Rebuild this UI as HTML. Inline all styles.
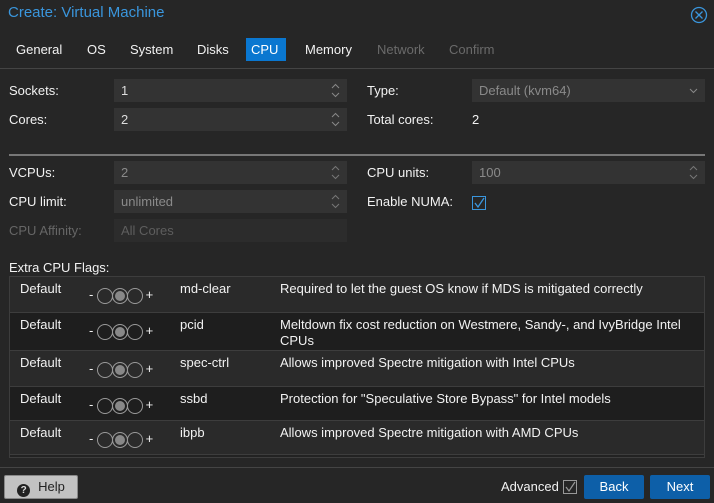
<!DOCTYPE html>
<html><head><style>
body{margin:0;width:714px;height:503px;background:#262626;font-family:"Liberation Sans",sans-serif;font-size:13px;color:#f2f2f2;position:relative;overflow:hidden}
.a{position:absolute}
.title{left:8px;top:4px;font-size:15px;color:#3a96dd}
.tab{top:38px;height:23px;line-height:23px;padding:0 5px;font-size:13px}
.inp{background:#333;height:23px;line-height:23px;padding-left:7px;box-sizing:border-box;color:#ddd}
.dis{color:#8a8a8a}
.lbl{line-height:23px}
.spin{position:absolute;right:7px;top:4px}
.row{position:absolute;left:10px;width:694px;border-bottom:1px solid #3d3d3d}
.row span{position:absolute;top:4px;line-height:16px}
.tri{position:absolute;left:79px;top:10px;font-size:13px;white-space:nowrap}
.c{display:inline-block;width:16px;height:16px;border:1px solid #999;border-radius:50%;vertical-align:middle;margin-right:-1px;box-sizing:border-box}
.btn{top:475px;height:24px;line-height:24px;text-align:center;border-radius:2px}
</style></head><body>
<div class="a title">Create: Virtual Machine</div>
<svg class="a" style="left:690px;top:6px" width="18" height="18"><circle cx="9" cy="9" r="7.5" fill="none" stroke="#3a96dd" stroke-width="1.3"/><path d="M5.5 5.5L12.5 12.5M12.5 5.5L5.5 12.5" stroke="#3a96dd" stroke-width="1.3"/></svg>
<div class="a tab" style="left:11px">General</div>
<div class="a tab" style="left:82px">OS</div>
<div class="a tab" style="left:125px">System</div>
<div class="a tab" style="left:192px">Disks</div>
<div class="a tab" style="left:246px;width:30px;background:#0a77d0;color:#fff">CPU</div>
<div class="a tab" style="left:300px">Memory</div>
<div class="a tab" style="left:372px;color:#6a6a6a">Network</div>
<div class="a tab" style="left:444px;color:#6a6a6a">Confirm</div>
<div class="a" style="left:0;top:68px;width:714px;height:1px;background:#444"></div>

<div class="a lbl" style="left:9px;top:79px">Sockets:</div>
<div class="a inp" style="left:114px;top:79px;width:233px">1<svg class="spin" width="9" height="15"><path d="M1 5L4.5 1.5L8 5M1 10L4.5 13.5L8 10" fill="none" stroke="#888"/></svg></div>
<div class="a lbl" style="left:9px;top:108px">Cores:</div>
<div class="a inp" style="left:114px;top:108px;width:233px">2<svg class="spin" width="9" height="15"><path d="M1 5L4.5 1.5L8 5M1 10L4.5 13.5L8 10" fill="none" stroke="#888"/></svg></div>
<div class="a lbl" style="left:367px;top:79px">Type:</div>
<div class="a inp dis" style="left:472px;top:79px;width:233px">Default (kvm64)<svg class="spin" style="top:9px" width="9" height="6"><path d="M1 1L4.5 4.5L8 1" fill="none" stroke="#888"/></svg></div>
<div class="a lbl" style="left:367px;top:108px">Total cores:</div>
<div class="a lbl" style="left:472px;top:108px">2</div>

<div class="a" style="left:9px;top:154px;width:696px;height:2px;background:#777"></div>

<div class="a lbl" style="left:9px;top:161px">VCPUs:</div>
<div class="a inp dis" style="left:114px;top:161px;width:233px">2<svg class="spin" width="9" height="15"><path d="M1 5L4.5 1.5L8 5M1 10L4.5 13.5L8 10" fill="none" stroke="#777"/></svg></div>
<div class="a lbl" style="left:9px;top:190px">CPU limit:</div>
<div class="a inp dis" style="left:114px;top:190px;width:233px">unlimited<svg class="spin" width="9" height="15"><path d="M1 5L4.5 1.5L8 5M1 10L4.5 13.5L8 10" fill="none" stroke="#777"/></svg></div>
<div class="a lbl" style="left:9px;top:219px;color:#666">CPU Affinity:</div>
<div class="a inp" style="left:114px;top:219px;width:233px;background:#2c2c2c;color:#5e5e5e">All Cores</div>
<div class="a lbl" style="left:367px;top:161px">CPU units:</div>
<div class="a inp dis" style="left:472px;top:161px;width:233px">100<svg class="spin" width="9" height="15"><path d="M1 5L4.5 1.5L8 5M1 10L4.5 13.5L8 10" fill="none" stroke="#777"/></svg></div>
<div class="a lbl" style="left:367px;top:190px">Enable NUMA:</div>
<svg class="a" style="left:472px;top:196px" width="14" height="14"><rect x="0.5" y="0.5" width="13" height="13" fill="none" stroke="#3a96dd"/><path d="M3 7L6 11L12 2" fill="none" stroke="#3a96dd" stroke-width="1.3"/></svg>

<div class="a" style="left:9px;top:260px">Extra CPU Flags:</div>
<div class="a" style="left:9px;top:276px;width:696px;height:182px;border:1px solid #3d3d3d;box-sizing:border-box;background:#222;overflow:hidden">
<div class="row" style="left:0;top:0;height:35px;background:#2a2a2a"><span style="left:10px">Default</span><div class="tri">- <i class="c"></i><i class="c" style="background:#888;box-shadow:inset 0 0 0 2px #2a2a2a"></i><i class="c"></i> +</div><span style="left:170px">md-clear</span><span style="left:270px">Required to let the guest OS know if MDS is mitigated correctly</span></div>
<div class="row" style="left:0;top:36px;height:37px;background:#1e1e1e"><span style="left:10px">Default</span><div class="tri">- <i class="c"></i><i class="c" style="background:#888;box-shadow:inset 0 0 0 2px #1e1e1e"></i><i class="c"></i> +</div><span style="left:170px">pcid</span><span style="left:270px;width:420px">Meltdown fix cost reduction on Westmere, Sandy-, and IvyBridge Intel CPUs</span></div>
<div class="row" style="left:0;top:74px;height:35px;background:#2a2a2a"><span style="left:10px">Default</span><div class="tri">- <i class="c"></i><i class="c" style="background:#888;box-shadow:inset 0 0 0 2px #2a2a2a"></i><i class="c"></i> +</div><span style="left:170px">spec-ctrl</span><span style="left:270px">Allows improved Spectre mitigation with Intel CPUs</span></div>
<div class="row" style="left:0;top:110px;height:33px;background:#1e1e1e"><span style="left:10px">Default</span><div class="tri">- <i class="c"></i><i class="c" style="background:#888;box-shadow:inset 0 0 0 2px #1e1e1e"></i><i class="c"></i> +</div><span style="left:170px">ssbd</span><span style="left:270px">Protection for "Speculative Store Bypass" for Intel models</span></div>
<div class="row" style="left:0;top:144px;height:33px;background:#2a2a2a"><span style="left:10px">Default</span><div class="tri">- <i class="c"></i><i class="c" style="background:#888;box-shadow:inset 0 0 0 2px #2a2a2a"></i><i class="c"></i> +</div><span style="left:170px">ibpb</span><span style="left:270px">Allows improved Spectre mitigation with AMD CPUs</span></div>
</div>

<div class="a" style="left:0;top:467px;width:714px;height:1px;background:#444"></div>
<div class="a btn" style="left:4px;width:74px;background:#c2c2c2;color:#222;border:1px solid #888;box-sizing:border-box;line-height:22px"><span style="display:inline-block;width:13px;height:13px;border-radius:50%;background:#222;color:#ddd;font-size:10px;line-height:13px;font-weight:bold;vertical-align:-2px;margin-right:8px">?</span>Help</div>
<div class="a" style="left:501px;top:479px">Advanced</div>
<svg class="a" style="left:563px;top:480px" width="14" height="14"><rect x="0.5" y="0.5" width="13" height="13" fill="none" stroke="#999"/><path d="M3 7L6 11L12 2" fill="none" stroke="#999" stroke-width="1.2"/></svg>
<div class="a btn" style="left:584px;width:60px;background:#0d5fa8;color:#fff">Back</div>
<div class="a btn" style="left:650px;width:60px;background:#0d5fa8;color:#fff">Next</div>
</body></html>
